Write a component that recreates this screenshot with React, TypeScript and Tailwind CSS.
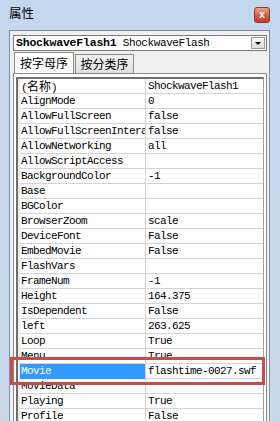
import React from 'react';

const rows: [string, string][] = [
    ['(名称)', 'ShockwaveFlash1'],
    ['AlignMode', '0'],
    ['AllowFullScreen', 'false'],
    ['AllowFullScreenInteractive', 'false'],
    ['AllowNetworking', 'all'],
    ['AllowScriptAccess', ''],
    ['BackgroundColor', '-1'],
    ['Base', ''],
    ['BGColor', ''],
    ['BrowserZoom', 'scale'],
    ['DeviceFont', 'False'],
    ['EmbedMovie', 'False'],
    ['FlashVars', ''],
    ['FrameNum', '-1'],
    ['Height', '164.375'],
    ['IsDependent', 'False'],
    ['left', '263.625'],
    ['Loop', 'True'],
    ['Menu', 'True'],
    ['Movie', 'flashtime-0027.swf'],
    ['MovieData', ''],
    ['Playing', 'True'],
    ['Profile', 'False'],
];

const mono = { fontFamily: '"Liberation Mono", "Noto Sans CJK SC", monospace' };
const cjk = { fontFamily: '"Noto Sans CJK SC", sans-serif' };

// names may contain Chinese; give those the 12px CJK face
const Label: React.FC<{ text: string }> = ({ text }) => {
    const parts = text.split(/([\u4e00-\u9fff]+)/);
    return (
        <>
            {parts.map((p, i) =>
                /[\u4e00-\u9fff]/.test(p) ? (
                    <span key={i} className="text-[12px] leading-[14px] tracking-normal" style={cjk}>{p}</span>
                ) : (
                    <span key={i}>{p}</span>
                )
            )}
        </>
    );
};

const App: React.FC = () => {
    return (
        <div className="relative w-[280px] h-[421px] overflow-hidden flex flex-col bg-gradient-to-b from-[#c3d7ee] to-[#c9d9ea]">
            {/* Title bar */}
            <div className="h-[30px] shrink-0 flex items-start justify-between pl-[9px] pr-[10px] pt-[4px]">
                <span className="text-[12.5px] leading-[18px] text-black" style={cjk}>属性</span>
                <div className="mt-[3px] w-[16px] h-[16px] rounded-[3px] border border-[#8a3a32] bg-gradient-to-b from-[#e8a493] via-[#d2604a] to-[#c0402c] flex items-center justify-center">
                    <span className="text-white text-[10px] font-bold leading-none" style={{ fontFamily: '"Liberation Sans", sans-serif' }}>x</span>
                </div>
            </div>

            {/* Client area */}
            <div className="flex-1 ml-[9px] mr-[10px] bg-[#f0f0f0] border-l border-t border-r border-[#7f8fa4] flex flex-col pl-[3px] pr-[2px] pt-[4px]">
                {/* Object combobox */}
                <div className="h-[16px] shrink-0 bg-white border border-[#7a7a7a] flex items-center pl-[2px] pr-[1px]">
                    <div className="flex-1 text-[11px] tracking-[-0.4px] leading-none text-black whitespace-nowrap overflow-hidden" style={mono}>
                        <span className="font-bold text-[11.5px] tracking-[-0.2px]">ShockwaveFlash1</span>
                        <span> ShockwaveFlash</span>
                    </div>
                    <div className="w-[14px] h-[12px] border border-[#9a9a9a] bg-gradient-to-b from-[#fafafa] to-[#dcdcdc] flex items-center justify-center">
                        <div className="w-0 h-0 border-l-[3px] border-r-[3px] border-t-[3px] border-l-transparent border-r-transparent border-t-black" />
                    </div>
                </div>

                {/* Tabs */}
                <div className="h-[21px] mt-[1px] shrink-0 flex items-end pl-[1px]">
                    <div className="h-[21px] w-[60px] bg-white border border-b-0 border-[#8a8a8a] flex items-center justify-center text-[12px] text-black" style={cjk}>
                        按字母序
                    </div>
                    <div className="h-[19px] w-[59px] ml-[1px] bg-gradient-to-b from-[#f2f2f2] to-[#e0e0e0] border border-b-0 border-[#8a8a8a] flex items-center justify-center text-[12px] text-black" style={cjk}>
                        按分类序
                    </div>
                </div>

                {/* Tab page */}
                <div className="flex-1 bg-white border-l border-t border-r border-[#8a8a8a] pl-[2px] pr-[2px] pt-[3px]">
                    <div className="h-full border-l-2 border-t-2 border-r border-l-[#6e6e6e] border-t-[#6e6e6e] border-r-[#a0a0a0] bg-[#ececec] pl-[2px]">
                        {rows.map(([name, value]) => {
                            const selected = name === 'Movie';
                            return (
                                <div key={name} className="h-[15px] flex text-[11px] tracking-[-0.6px] leading-[14px] text-black" style={mono}>
                                    <div
                                        className={`w-[125px] shrink-0 pl-[1px] whitespace-nowrap overflow-hidden border-b ${
                                            selected ? 'bg-[#3399ff] text-white border-[#3399ff]' : 'bg-white border-[#d4d4d4]'
                                        }`}
                                    >
                                        <Label text={name} />
                                    </div>
                                    <div className="w-px shrink-0 bg-[#d4d4d4]" />
                                    <div className="flex-1 pl-[2px] bg-white border-b border-[#d4d4d4] whitespace-nowrap overflow-hidden">
                                        {value}
                                    </div>
                                </div>
                            );
                        })}
                    </div>
                </div>
            </div>

            {/* Annotation box around the selected row */}
            <div className="absolute left-[10px] top-[357px] w-[255px] h-[28px] border-[3px] border-[#cb4a4a]" />
        </div>
    );
};

export default App;
